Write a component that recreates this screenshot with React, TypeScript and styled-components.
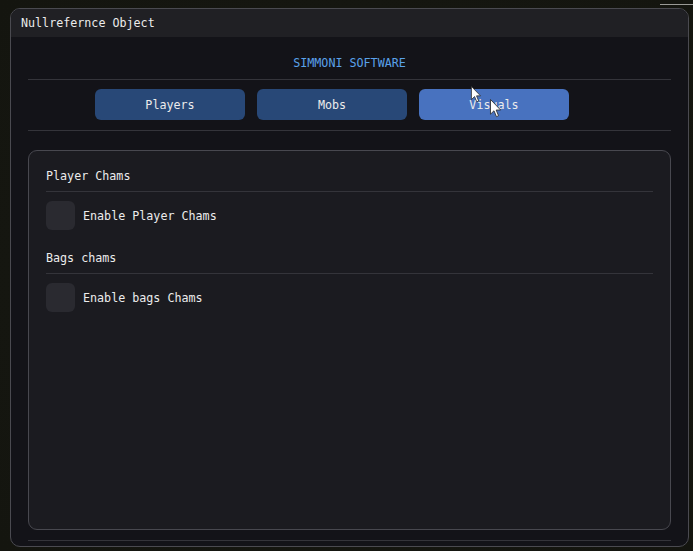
import React from "react";
import styled, { createGlobalStyle } from "styled-components";

const Global = createGlobalStyle`
  html, body { margin: 0; padding: 0; background: #15160f; }
  body { width: 693px; height: 551px; overflow: hidden; position: relative; }
`;

const font = `"DejaVu Sans Mono", "Liberation Mono", monospace`;

const Page = styled.div`
  position: relative;
  width: 693px;
  height: 551px;
  padding: 8px 0 0 10px;
  box-sizing: border-box;
  background: radial-gradient(ellipse at 50% 50%, #171812 0%, #14150f 100%);
`;

const TopLine = styled.div`
  position: absolute;
  left: 660px;
  top: 4px;
  width: 33px;
  height: 1px;
  background: #9a9a96;
`;

const Window = styled.div`
  width: 679px;
  height: 539px;
  box-sizing: border-box;
  border: 1px solid #4a4a50;
  border-radius: 10px;
  background: #131318;
  display: flex;
  flex-direction: column;
  overflow: hidden;
  font-family: ${font};
  font-size: 11.7px;
  color: #ececec;
`;

const TitleBar = styled.div`
  height: 27px;
  background: #202024;
  display: flex;
  align-items: center;
  padding-left: 10px;
  padding-bottom: 1px;
  flex-shrink: 0;
`;

const Body = styled.div`
  flex: 1;
  display: flex;
  flex-direction: column;
  padding: 0 17px;
`;

const Brand = styled.div`
  height: 42px;
  padding-top: 10px;
  box-sizing: border-box;
  display: flex;
  align-items: center;
  justify-content: center;
  color: #5aa2ea;
`;

const Separator = styled.div<{ $mt?: number }>`
  height: 1px;
  background: #34343a;
  margin-top: ${(p) => p.$mt ?? 0}px;
  flex-shrink: 0;
`;

const TabRow = styled.div`
  display: flex;
  gap: 12px;
  padding: 9px 0 10px 67px;
`;

const TabButton = styled.div<{ $hover?: boolean }>`
  width: 150px;
  height: 31px;
  border-radius: 6px;
  background: ${(p) => (p.$hover ? "#4872bf" : "#284877")};
  display: flex;
  align-items: center;
  justify-content: center;
  color: #ececec;
`;

const Child = styled.div`
  margin-top: 19px;
  height: 380px;
  box-sizing: border-box;
  border: 1px solid #48484f;
  border-radius: 9px;
  background: #1b1b20;
  padding: 17px 17px 0 17px;
  display: flex;
  flex-direction: column;
`;

const Heading = styled.div<{ $mt?: number }>`
  height: 14px;
  line-height: 16px;
  margin-top: ${(p) => p.$mt ?? 0}px;
`;

const CheckRow = styled.div`
  display: flex;
  align-items: center;
  gap: 8px;
  margin-top: 9px;
`;

const CheckLabel = styled.span`
  padding-top: 1px;
`;

const CheckBox = styled.div`
  width: 29px;
  height: 29px;
  border-radius: 6px;
  background: #2a2a30;
`;

const Cursor = styled.svg<{ $x: number; $y: number }>`
  position: absolute;
  left: ${(p) => p.$x}px;
  top: ${(p) => p.$y}px;
  overflow: visible;
`;

const Arrow = ({ x, y, s }: { x: number; y: number; s: number }) => (
  <Cursor $x={x} $y={y} width={12 * s} height={20 * s} viewBox="0 0 12 20">
    <path
      d="M0.5 0.5 L0.5 16 L4.2 12.4 L6.8 18.6 L9 17.6 L6.5 11.6 L11.2 11.6 Z"
      fill="#ffffff"
      stroke="#2a2a2a"
      strokeWidth="0.9"
      strokeLinejoin="round"
    />
  </Cursor>
);

export default function App() {
  return (
    <>
      <Global />
      <Page>
        <TopLine />
        <Window>
          <TitleBar>Nullrefernce Object</TitleBar>
          <Body>
            <Brand>SIMMONI SOFTWARE</Brand>
            <Separator />
            <TabRow>
              <TabButton>Players</TabButton>
              <TabButton>Mobs</TabButton>
              <TabButton $hover>Visuals</TabButton>
            </TabRow>
            <Separator />
            <Child>
              <Heading>Player Chams</Heading>
              <Separator $mt={9} />
              <CheckRow>
                <CheckBox />
                <CheckLabel>Enable Player Chams</CheckLabel>
              </CheckRow>
              <Heading $mt={20}>Bags chams</Heading>
              <Separator $mt={9} />
              <CheckRow>
                <CheckBox />
                <CheckLabel>Enable bags Chams</CheckLabel>
              </CheckRow>
            </Child>
            <Separator $mt={10} />
          </Body>
        </Window>
        <Arrow x={471} y={86} s={0.85} />
        <Arrow x={490} y={99} s={0.95} />
      </Page>
    </>
  );
}
